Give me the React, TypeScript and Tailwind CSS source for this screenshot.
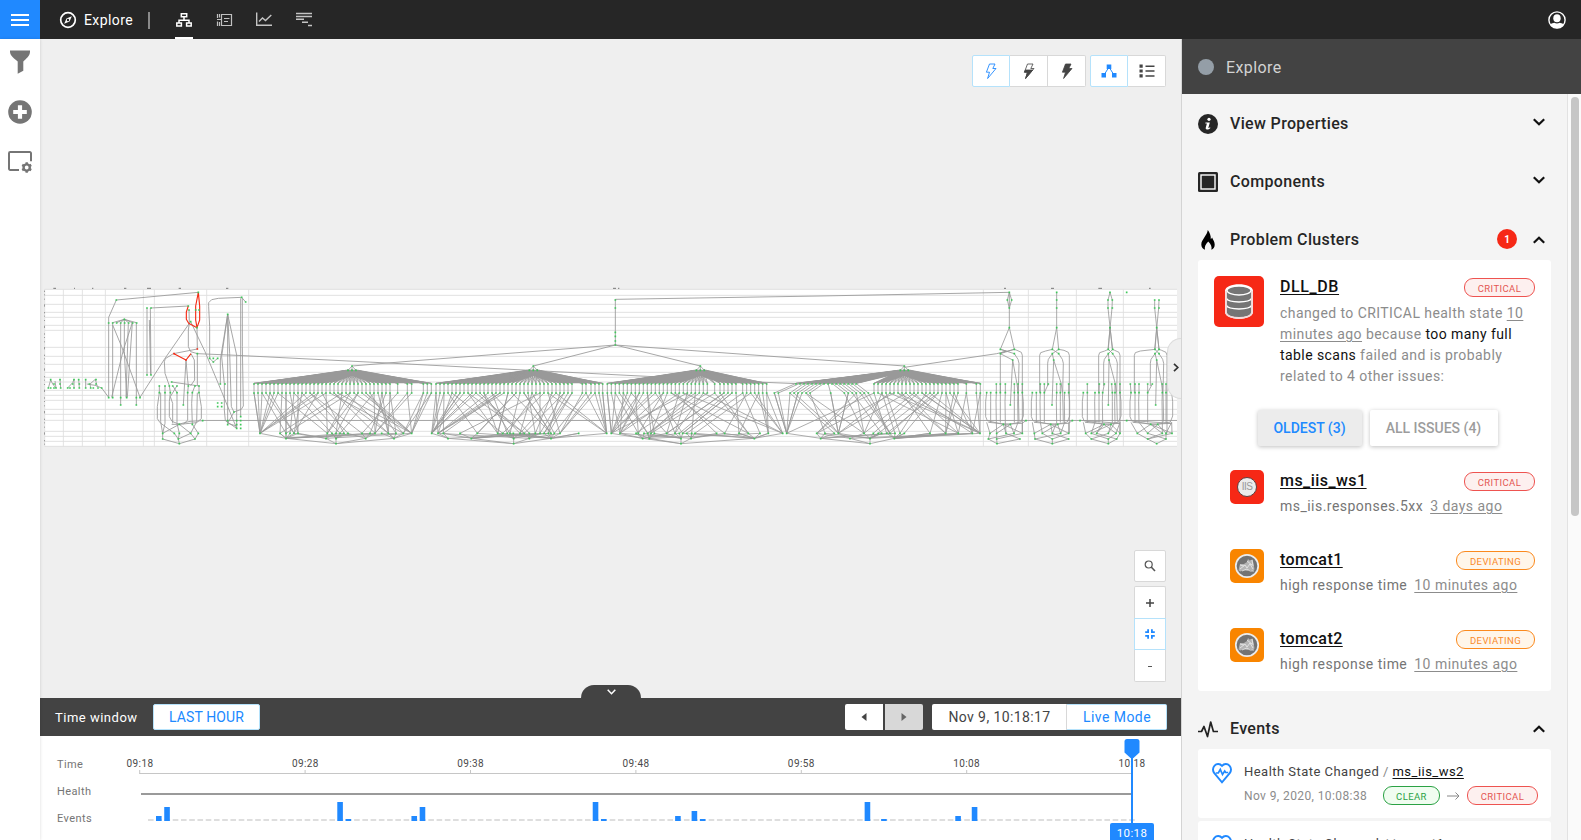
import React from "react";

type Pt = [number, number];

/* ---------- topology graph ---------- */

const EDGE = "#999999";
const OK = "#3fc85a";
const BAD = "#f52a14";

const path = (pts: Pt[]) => "M" + pts.map((p) => p.join(" ")).join("L");
const line = (...n: number[]): Pt[] => {
  const out: Pt[] = [];
  for (let i = 0; i < n.length; i += 2) out.push([n[i], n[i + 1]]);
  return out;
};
const range = (a: number, b: number, step: number) => {
  const out: number[] = [];
  for (let x = a; x <= b + 0.5; x += step) out.push(Math.round(x));
  return out;
};

function random(seed: number) {
  let s = seed;
  return () => {
    s = (s * 1664525 + 1013904223) % 4294967296;
    return s / 4294967296;
  };
}

const Edges = ({ lines, color = EDGE, width = 3 }: { lines: Pt[][]; color?: string; width?: number }) => (
  <path d={lines.map(path).join("")} fill="none" stroke={color} strokeWidth={width} strokeLinejoin="round" />
);

const Nodes = ({ pts, color = OK }: { pts: Pt[]; color?: string }) => (
  <path d={pts.map(([x, y]) => `M${x - 2.5} ${y - 2.5}h5v5h-5z`).join("")} fill={color} />
);

const row = (y: number, xs: number[]): Pt[] => xs.map((x) => [x, y] as Pt);

interface ClusterData {
  apex: number;
  top: number[];
  mid: number[];
  low: number[];
  base: number[];
  end: number;
  seed: number;
  notch?: Pt[];
}

const clusters: ClusterData[] = [
  {
    apex: 936,
    top: [...range(642, 1050, 12), 1073, 1102, 1115, 1150, 1162, 1174],
    mid: [...range(642, 1050, 12), 1073, 1102, 1115, 1150, 1162, 1174],
    low: [660, 720, 738, 750, 762, 774, 862, 876, 888, 900, 912, 924, 966, 990, 1005, 1025, 1045, 1068, 1090, 1115],
    base: [738, 858, 888, 977, 1062],
    end: 888,
    seed: 11,
  },
  {
    apex: 1480,
    top: [...range(1188, 1600, 12), 1627, 1638, 1653, 1665, 1677, 1688],
    mid: [...range(1188, 1600, 12), 1627, 1638, 1653, 1665, 1677, 1688],
    low: [1175, 1194, 1210, 1260, 1312, 1373, 1388, 1402, 1410, 1420, 1440, 1453, 1468, 1486, 1500, 1512, 1525, 1533, 1543, 1560, 1616, 1700],
    base: [1224, 1294, 1421, 1468, 1533],
    end: 1421,
    seed: 27,
  },
  {
    apex: 1981,
    top: [...range(1702, 2010, 12), 2024, 2040, ...range(2052, 2090, 12), ...range(2108, 2182, 12)],
    mid: [...range(1702, 2010, 12), 2024, 2040, ...range(2052, 2090, 12), ...range(2108, 2182, 12)],
    low: [1714, 1740, 1788, 1795, 1812, 1823, 1833, 1843, 1880, 1905, 1918, 1928, 1940, 1955, 1965, 2030, 2054, 2097, 2125, 2160, 2185, 2228],
    base: [1808, 1828, 1923, 1953, 2143],
    end: 1923,
    seed: 58,
  },
  {
    apex: 2593,
    top: [...range(2268, 2450, 12), ...range(2502, 2760, 12), 2779, 2809, 2821],
    mid: [2203, 2215, 2250, 2262, 2274, 2286, 2298, 2310, 2372, 2413, 2425, 2437, 2449, 2461, 2473, 2485, ...range(2502, 2760, 12), 2779, 2809, 2821],
    low: [2240, 2330, 2355, 2383, 2395, 2472, 2500, 2515, 2525, 2540, 2550, 2565, 2580, 2593, 2670, 2717, 2755, 2797, 2820],
    base: [2342, 2430, 2490, 2563],
    end: 2490,
    seed: 90,
    notch: line(2452, 311, 2498, 311, 2545, 289),
  },
];

function Cluster({ c }: { c: ClusterData }) {
  const rnd = random(c.seed);
  const lines: Pt[][] = [];
  for (const x of [c.apex - 12, c.apex, c.apex + 12]) lines.push(line(c.apex, 258, x, 271));
  c.top.forEach((x, i) => {
    lines.push(line(c.apex - 12, 271, x, 310), line(c.apex, 271, x, 310), line(c.apex + 12, 271, x, 310));
    lines.push(line(x, 310, c.mid[i], 339));
  });
  const n = c.low.length;
  const edgeTo = (x: number, j: number) => lines.push(line(x, 339, c.low[Math.max(0, Math.min(n - 1, j))], 460));
  c.mid.forEach((x, i) => {
    const t = i / (c.mid.length - 1);
    const spread = 0.14 + 0.95 * Math.sin(Math.PI * Math.min(1, t));
    edgeTo(x, Math.round((t + (rnd() - 0.5) * spread) * (n - 1)));
    if (i % 2 === 0) edgeTo(x, Math.round((t + (rnd() - 0.5) * spread) * (n - 1)));
  });
  c.low.forEach((x, i) => {
    const near = c.base.reduce((a, b) => (Math.abs(b - x) < Math.abs(a - x) ? b : a));
    lines.push(line(x, 460, near, 475));
    const other = c.base[Math.floor(rnd() * c.base.length)];
    if (i % 3 !== 0) lines.push(line(x, 460, other, 475));
  });
  for (const x of c.base) lines.push(line(x, 475, c.end, 491));
  const a = c.apex;
  const fan = line(a - 18, 269, a + 18, 269, c.top[c.top.length - 1], 310, a + 90, 310, a + 50, 305, a, 288, a - 50, 305, a - 90, 310, c.top[0], 310);
  return (
    <g>
      <path d={path(fan) + "z"} fill={EDGE} />
      {c.notch && <path d={path(c.notch) + "z"} fill="#ffffff" />}
      <Edges lines={lines} width={2.4} />
      <Nodes pts={[[c.apex, 258], ...row(271, [c.apex - 12, c.apex, c.apex + 12]), ...row(312, c.top), ...row(339, c.mid), ...row(460, c.low), ...row(476, c.base), [c.end, 491]]} />
    </g>
  );
}

interface TowerData {
  x: number;
  head: "diamond" | "line" | "twin" | "split";
  shoulders: [number, number];
  neck: number;
  pin: number;
  reach: [number, number];
  upper: number[];
  lower: number[];
  feet: number[];
  base: number[];
  end: number;
  join: number;
}

const towers: TowerData[] = [
  { x: 658, head: "diamond", shoulders: [631, 673], neck: 668, pin: 661, reach: [631, 697], upper: [619, 631, 646, 673, 684, 697], lower: [590, 602, 619, 631, 646, 673, 684, 697], feet: [600, 620, 648, 672, 697], base: [595, 620, 690], end: 621, join: 708 },
  { x: 800, head: "line", shoulders: [787, 806], neck: 791, pin: 786, reach: [749, 838], upper: [751, 763, 775, 800, 811, 836], lower: [727, 739, 751, 763, 800, 811, 824, 836], feet: [733, 757, 787, 812, 836], base: [735, 787, 836], end: 787, join: 847 },
  { x: 960, head: "twin", shoulders: [955, 968], neck: 957, pin: 955, reach: [926, 990], upper: [892, 928, 943, 965, 975, 990], lower: [880, 892, 915, 927, 938, 967, 975, 990], feet: [887, 904, 920, 955, 978, 990], base: [904, 955, 980], end: 955, join: 870 },
  { x: 1100, head: "split", shoulders: [1095, 1107], neck: 1100, pin: 1097, reach: [1033, 1131], upper: [1021, 1035, 1047, 1073, 1087, 1117, 1128], lower: [1023, 1035, 1047, 1073, 1117, 1128, 1145], feet: [1042, 1073, 1117, 1128, 1146], base: [1073, 1128], end: 1100, join: 1010 },
];

function Tower({ t }: { t: TowerData }) {
  const { x, shoulders: [a, b] } = t;
  const lines: Pt[][] = [];
  const nodes: Pt[] = [];
  if (t.head === "diamond") {
    lines.push(line(x, 37, x - 6, 60, x, 84, x + 7, 60, x, 37), line(x, 37, x, 143));
    nodes.push([x, 37], [x - 6, 60], [x + 7, 60], [x, 84]);
  } else if (t.head === "line") {
    lines.push(line(x, 37, x, 143));
    nodes.push([x, 37], [x, 60], [x, 84]);
  } else {
    lines.push(line(x - 6, 60, x - 6, 84, x + 7, 208), line(x + 7, 60, x + 6, 84, x - 6, 208));
    nodes.push(...row(60, [x - 6, x + 7]), ...row(84, [x - 6, x + 7]));
    if (t.head === "twin") {
      lines.push(line(x - 6, 60, x, 37, x + 7, 60));
      nodes.push([x, 37]);
    } else nodes.push([x - 90, 37]);
  }
  lines.push(line(x, 143, a, 208), line(x, 143, b, 208));
  const [l, r] = t.reach;
  lines.push(line(a, 208, l + 18, 213, l + 3, 218, l, 226, l, 338));
  lines.push(line(b, 208, r - 16, 211, r - 3, 217, r, 226, r, 460));
  lines.push(line(a, 208, b, 221, b + 11, 238, b + 14, 250, b + 12, 338, b + 14, 425));
  lines.push(line(b, 208, a, 221, t.neck, 240, t.pin, 375));
  lines.push(line(t.neck, 240, b + 8, 312, b + 11, 338));
  if (t.head !== "diamond") lines.push(line(a, 221, a - 12, 238, a - 14, 250, a - 14, 318));
  const first = t.lower[0];
  const last = t.lower[t.lower.length - 1];
  lines.push(line(first, 338, first - 3, 365, first - 3, 410, first + 2, 422, x - 20, 433, last, 430, t.join, 421));
  lines.push(line(last, 338, last + 3, 365, last + 3, 408, last - 4, 426, x, 433, first + 5, 427));
  t.upper.forEach((u) => {
    const below = t.lower.reduce((p, q) => (Math.abs(q - u) < Math.abs(p - u) ? q : p));
    lines.push(line(u, 312, below, 338));
  });
  t.lower.slice(1, -1).forEach((u, i) => lines.push(line(u, 338, u - (i % 2), 365, u, 428)));
  t.feet.forEach((f, i) => {
    lines.push(line(x + (i % 2 ? 3 : -18), 433, f, 460));
    lines.push(line(t.lower[Math.min(t.lower.length - 1, i * 2)], 427, f, 460));
    lines.push(line(f, 460, t.base[i % t.base.length], 477));
  });
  t.base.forEach((f) => lines.push(line(f, 477, t.end, 491)));
  nodes.push([x, 143], [a, 208], [b, 208], [a, 221], [b, 221], [t.neck, 240], [t.pin, 375], [t.join, 422], [x - 18, 433], [x + 3, 433], [t.end, 491]);
  nodes.push(...row(312, t.upper), ...row(338, t.lower), ...row(460, t.feet), ...row(477, t.base));
  return (
    <g>
      <Edges lines={lines} width={2.5} />
      <Nodes pts={nodes} />
    </g>
  );
}

function LeftGroup() {
  const grey: Pt[][] = [
    line(475, 37, 229, 60, 206, 112, 206, 352),
    line(253, 118, 218, 128, 218, 352),
    line(230, 128, 253, 118, 242, 128, 242, 375),
    line(265, 128, 253, 118, 289, 128, 289, 375),
    line(253, 118, 277, 128, 262, 352),
    line(253, 118, 253, 215, 260, 352),
    line(265, 128, 258, 352),
    line(218, 135, 245, 200, 300, 352),
    line(277, 128, 250, 210, 215, 352),
    line(300, 352, 373, 238, 450, 127),
    line(445, 78, 333, 84),
    line(321, 84, 321, 285),
    line(331, 84, 333, 285),
    line(328, 120, 332, 285),
    line(447, 90, 448, 130, 445, 150, 445, 200, 452, 215, 472, 221),
    line(471, 143, 472, 207, 400, 221, 376, 236, 373, 245, 375, 280, 388, 317),
    line(452, 125, 495, 215, 545, 335, 590, 445),
    line(438, 240, 430, 375),
    line(438, 240, 443, 300, 445, 317),
    line(453, 221, 463, 240, 464, 300, 452, 317),
    line(472, 221, 472, 317),
    line(395, 306, 478, 318),
    line(358, 317, 358, 338, 352, 380, 352, 416, 360, 428, 403, 460),
    line(375, 317, 375, 430, 368, 460),
    line(388, 317, 391, 338, 388, 365, 388, 410, 396, 424, 418, 433),
    line(398, 317, 411, 338, 411, 430, 418, 460),
    line(411, 317, 391, 350, 398, 370, 398, 430),
    line(362, 338, 362, 425, 368, 460),
    line(445, 317, 443, 338, 443, 420, 430, 433),
    line(465, 317, 457, 338, 455, 370, 457, 433, 475, 460),
    line(477, 317, 477, 338, 484, 380, 484, 416, 470, 428, 418, 433, 395, 433),
    line(472, 338, 470, 425, 452, 460),
    line(415, 433, 450, 424, 488, 422),
    line(418, 433, 368, 460, 368, 477, 418, 491, 465, 477, 475, 460),
    line(418, 433, 452, 460, 465, 477),
    line(403, 460, 415, 477, 418, 491),
    line(418, 460, 415, 477, 452, 460),
    line(605, 52, 535, 55, 515, 59, 506, 68, 506, 80, 509, 140, 509, 235, 520, 246, 533, 235),
    line(605, 52, 617, 66),
    line(607, 55, 607, 200, 610, 378, 604, 388, 582, 396),
    line(602, 55, 602, 410),
    line(563, 103, 541, 240, 541, 312),
    line(563, 103, 545, 230, 553, 312, 553, 390, 556, 422, 590, 445),
    line(563, 103, 563, 430, 590, 438),
    line(563, 103, 569, 220, 574, 380, 582, 396),
    line(563, 103, 590, 225, 590, 445),
    line(582, 396, 563, 430),
    line(25, 324, 32, 300, 38, 312, 48, 324, 45, 303),
    line(62, 324, 60, 298),
    line(83, 324, 98, 308, 102, 298, 102, 324),
    line(118, 324, 116, 298),
    line(137, 298, 137, 324),
    line(140, 312, 165, 316, 185, 324, 206, 352),
    line(152, 324, 150, 312, 166, 298, 172, 320),
  ];
  const red: Pt[][] = [
    line(475, 37, 467, 78, 467, 120, 471, 143, 479, 120, 479, 78, 475, 37),
    line(445, 78, 439, 96, 439, 118, 446, 130, 471, 143),
    line(402, 221, 438, 240, 453, 221),
  ];
  const nodes: Pt[] = [
    [229, 60], [253, 118], ...row(129, range(206, 290, 12)), ...row(353, [206, 218, 242, 260, 289, 300]), ...row(375, [242, 289]),
    ...row(84, [321, 333]), ...row(285, [321, 333]), [475, 37], [445, 78], [447, 90], [467, 90], [477, 90], [452, 125], [471, 143],
    [472, 221], [395, 306], [430, 375], ...row(318, [358, 375, 388, 398, 411, 445, 465, 477]), ...row(338, [358, 375, 391, 411, 443, 457, 477]),
    [418, 433], [457, 433], [488, 422], ...row(460, [368, 403, 418, 452, 475]), ...row(477, [368, 415, 465]), [418, 491],
    [605, 52], [617, 66], [563, 103], ...row(235, [509, 520, 533]), [520, 246], ...row(312, [541, 555]),
    ...row(369, [533, 545]), ...row(380, [533, 545]), [582, 396], [602, 410], [563, 422], [563, 434],
    ...row(422, [590, 602]), ...row(434, [590, 602]), ...row(445, [590, 602]),
    ...row(324, [25, 32, 42, 48, 62, 83, 90, 102, 118, 137, 152, 160, 174, 185]), ...row(299, [32, 60, 102, 116, 137, 168]),
    ...row(312, [42, 60, 98, 118, 148, 168]),
  ];
  return (
    <g>
      <Edges lines={grey} width={2.6} />
      <Edges lines={red} color={BAD} width={3.4} />
      <Nodes pts={nodes} />
      <Nodes pts={[[472, 207], [402, 221], [438, 240]]} color={BAD} />
    </g>
  );
}

const gridRows = [28, 46, 73, 97, 112, 136, 151, 202, 229, 253, 277, 292, 306, 331, 346, 361, 388, 403, 421, 454, 469, 484, 499];
const gridCols = [14, 70, 127, 196, 310, 343, 500, 626, 2830, 2965, 3109, 3250];

function Topology() {
  return (
    <svg className="absolute left-0 top-[241px]" width="1141" height="175" viewBox="0 0 3423 525">
      <rect x="14" y="28" width="3397" height="471" fill="#ffffff" />
      <path d={gridRows.map((y) => `M14 ${y}H3411`).join("")} stroke="#dcdcdc" strokeWidth="2.6" />
      <path d={gridCols.map((x) => `M${x} 28V499`).join("")} stroke="#dedede" strokeWidth="2.6" />
      <path d="M488 421.500H3411" stroke="#a8a8a8" strokeWidth="3" />
      <path
        d="M40 25h8M102 25h3M156 25h4M252 25h7M321 25h12M416 25h7M558 25h7M1719 25h9M1734 25h4M2892 25h6M3033 25h9M3175 25h11M3327 25h5"
        stroke="#777"
        strokeWidth="3"
      />
      <path d="M13.500 32V495" stroke="#8a8a8a" strokeWidth="2.500" strokeDasharray="4 7 3 10 3 14 7 16" />
      <Edges
        width={2.6}
        lines={[
          line(472, 221, 590, 226, 1140, 254, 1840, 290),
          line(936, 258, 1140, 241, 1726, 195, 1480, 258),
          line(1981, 258, 1726, 195, 2250, 233, 2593, 258),
          line(1726, 195, 1726, 58, 2340, 48, 2908, 37),
          line(2593, 262, 2870, 221, 2923, 208),
          line(2150, 306, 2270, 311),
        ]}
      />
      <Nodes pts={[[1726, 60], [1726, 84], [1726, 157], [1726, 169], [1726, 183], [1726, 195]]} />
      {clusters.map((c) => (
        <Cluster key={c.apex} c={c} />
      ))}
      <LeftGroup />
      <g transform="translate(2250 0)">
        {towers.map((t) => (
          <Tower key={t.x} t={t} />
        ))}
      </g>
    </svg>
  );
}

/* ---------- icons ---------- */

const bolt = "M5.500 1h5.500l-2.200 4.500H12L3.600 15.500l1.900-6.300H2.400z";

const Compass = () => (
  <svg width="18" height="18" viewBox="0 0 18 18" fill="none" stroke="#fff" strokeWidth="1.700">
    <circle cx="9" cy="9" r="7.300" />
    <path d="M12.800 5.200 7.500 7.400 5.200 12.800 10.500 10.500z" fill="#fff" stroke="none" />
    <circle cx="9" cy="9" r="1.200" fill="#262626" stroke="none" />
  </svg>
);

const NavTopology = () => (
  <svg width="18" height="16" viewBox="0 0 18 16" fill="none" stroke="#fff" strokeWidth="1.500">
    <path d="M6.300 1.800h5.400v3H6.300zM1.800 11h4.600v3H1.800zM11.600 11h4.600v3h-4.600zM9 5v3.300M4 11V8.300h10V11" />
  </svg>
);
const NavTrace = () => (
  <svg width="17" height="14" viewBox="0 0 17 14" fill="none" stroke="#c0c0c0" strokeWidth="1.200">
    <path d="M5.500 1.500h10v11h-10zM1.500 1v4M1.500 8.500v4.500M3.500 1v3.500M3.500 9v4M1 6.500h4.500M8 5.500h5.500M8 8.500h4" />
  </svg>
);
const NavChart = () => (
  <svg width="18" height="15" viewBox="0 0 18 15" fill="none" stroke="#c4c4c4" strokeWidth="1.400">
    <path d="M1.700.5v12.800H17M4 9.500 7.500 6l3 2.500L16.300 3" />
  </svg>
);
const NavBars = () => (
  <svg width="18" height="15" viewBox="0 0 18 15" stroke="#c4c4c4" strokeWidth="1.500">
    <path d="M1 1.500h16M1 4.500h16M1 7.200h8M7 10.200h6M13 13.500h4" />
  </svg>
);

const UserIcon = () => (
  <svg width="18" height="18" viewBox="0 0 18 18">
    <circle cx="9" cy="9" r="8.100" fill="none" stroke="#fff" strokeWidth="1.400" />
    <ellipse cx="9" cy="7.200" rx="3.700" ry="4" fill="#fff" />
    <path d="M2 13.500c1.500-1.300 3.500-1.500 4.300-1.800 1.700 1.100 3.700 1.100 5.400 0 .8.300 2.800.5 4.300 1.800A8.200 8.200 0 0 1 9 17.300a8.200 8.200 0 0 1-7-3.800z" fill="#fff" />
  </svg>
);

const Filter = () => (
  <svg width="20" height="24" viewBox="0 0 20 24" fill="#757575">
    <path d="M0 .500h20v1.200c0 4.200-4 7-6.700 9.800v9.300l-5.600 3V11.500C5 8.800 0 6 0 1.700z" />
  </svg>
);
const AddCircle = () => (
  <svg width="24" height="24" viewBox="0 0 24 24">
    <circle cx="12" cy="12" r="11.800" fill="#757575" />
    <path d="M12 5.200v13.600M5.200 12h13.600" stroke="#fff" strokeWidth="4.200" />
  </svg>
);
const ScreenGear = () => (
  <svg width="24" height="23" viewBox="0 0 24 23" fill="none" stroke="#757575">
    <path d="M11 18.900H2.200A1.200 1.200 0 0 1 1 17.700V2.200A1.200 1.200 0 0 1 2.200 1h19.600A1.200 1.200 0 0 1 23 2.200v8" strokeWidth="2" />
    <circle cx="18.700" cy="16.500" r="3.100" strokeWidth="2.400" />
    <path d="M18.700 11.300v2M18.700 19.700v2M14.200 13.900l1.700 1M21.500 18.100l1.700 1M14.200 19.100l1.700-1M21.500 14.900l1.700-1" strokeWidth="2.400" />
  </svg>
);

const Chevron = ({ up = false }: { up?: boolean }) => (
  <svg width="12" height="8" viewBox="0 0 12 8" fill="none" stroke="#111" strokeWidth="2.200">
    <path d={up ? "M.8 6.800 6 1.700l5.200 5.100" : "M.8 1.200 6 6.300l5.200-5.100"} />
  </svg>
);

const InfoIcon = () => (
  <svg width="20" height="20" viewBox="0 0 20 20">
    <circle cx="10" cy="10" r="10" fill="#262626" />
    <circle cx="11" cy="5.300" r="1.600" fill="#fff" />
    <path d="M7.500 8.400h4.300l-1.500 5.500c.6.200 1.200-.2 1.700-.6l.4.600c-1.200 1.400-2.400 1.800-3.400 1.700-1.200-.2-1.500-1-1.200-2.100l1.100-4H7.300z" fill="#fff" />
  </svg>
);
const ComponentsIcon = () => (
  <svg width="20" height="20" viewBox="0 0 20 20">
    <rect width="20" height="20" rx="1.500" fill="#262626" />
    <rect x="3" y="3" width="14" height="14" fill="none" stroke="#fff" strokeWidth="1.400" />
  </svg>
);
const Flame = () => (
  <svg width="20" height="20" viewBox="0 0 20 20" fill="#000">
    <path d="M9.800 0c-.4 2.900-1.700 4.500-3.200 7C5 9.800 3.200 11.600 3.300 14.700c.1 2.500 1.700 4.400 3.700 5-.6-2.900.2-5 3.200-8.200 2.800 3 3.800 5 3.200 8.200 1.900-.7 3.300-2.600 3.300-5 0-2.800-1.400-4.600-2.600-7.300-.4.800-.8 1.200-1.300 1.500C13 5.900 11.700 2.600 9.800 0z" />
  </svg>
);
const Pulse = () => (
  <svg width="20" height="17" viewBox="0 0 20 17" fill="none" stroke="#222" strokeWidth="1.700" strokeLinejoin="round">
    <path d="M0 10.500h3.500L6 5.500l3.500 10L12.700 1l2.700 9.500H20" />
  </svg>
);
const HeartPulse = () => (
  <svg width="20" height="21" viewBox="0 0 20 21" fill="none" stroke="#2089ff">
    <path d="M10 2.800C8 .6 4.600.3 2.600 2.600.5 5 .8 8 2.300 10.200L10 19.300l7.700-9.100C19.200 8 19.500 5 17.400 2.600 15.400.3 12 .6 10 2.800z" strokeWidth="1.900" />
    <path d="M3.800 10h2.500l2-3.500 2.200 5 2.200-3.500 1 1.500h2.500" strokeWidth="1.700" />
  </svg>
);

const Database = () => (
  <svg width="50" height="51" viewBox="0 0 50 51">
    <path d="M11 15c0-9 28-9 28 0v21c0 9-28 9-28 0z" fill="#fff" />
    <path d="M12.500 15.500c0-6 25-6 25 0v20.500c0 7-25 7-25 0z" fill="#757575" />
    <ellipse cx="25" cy="14.500" rx="12" ry="4.500" fill="#757575" stroke="#fff" strokeWidth="1.300" />
    <path d="M12.500 22.500c2 4.500 23 4.500 25 0M12.500 29.500c2 4.500 23 4.500 25 0" fill="none" stroke="#fff" strokeWidth="1.500" />
    <path d="M12 15v21c0 8 26 8 26 0V15" fill="none" stroke="#f2dada" strokeWidth="1.800" />
  </svg>
);

const Iis = () => (
  <span className="flex size-[34px] shrink-0 items-center justify-center rounded-[5px] bg-[#f62816]">
    <span className="flex size-5 items-center justify-center rounded-full border border-[#5c4040] bg-[#ececec] font-['Liberation_Sans'] text-[10px] leading-none tracking-[-0.5px] text-[#999]">
      IIS
    </span>
  </span>
);
const Tomcat = () => (
  <span className="flex size-[34px] shrink-0 items-center justify-center rounded-[5px] bg-[#f98500]">
    <svg width="26" height="26" viewBox="0 0 26 26">
      <circle cx="13" cy="13" r="11.200" fill="#737373" stroke="#ececec" strokeWidth="1.700" />
      <path d="M5 15l1-4 4 0 3-2 1-3 1.500 1.500 3-1 1 4 1 6-2 1.500-3-1-2 1-4-1-3 1.500-2-1z" fill="#b5b5b5" />
      <path d="M6 16l5-4 2 3 3-4 3 5M8 18l5-2 3 2 4 0M13 8l5 4M18 7l1 6M6 12l4 1" fill="none" stroke="#ededed" strokeWidth=".8" />
    </svg>
  </span>
);

/* ---------- shared pieces ---------- */

const badgeTones = {
  critical: "border-[#ee5350] bg-[#fdf0ef] text-[#e45653] w-[71px]",
  deviating: "border-[#fb8a1e] bg-[#fff6ea] text-[#f98a2b] w-[79px]",
  clear: "border-[#2ba245] bg-[#f0fdf0] text-[#2ba245] w-[57px]",
};

const Badge = ({ tone, children }: { tone: keyof typeof badgeTones; children: string }) => (
  <span className={`flex h-[19px] shrink-0 items-center justify-center rounded-[9px] border pt-[3px] text-[9.5px] leading-none tracking-[0.4px] ${badgeTones[tone]}`}>
    {children}
  </span>
);

const Section = ({ icon, title, open, count }: { icon: React.ReactNode; title: string; open?: boolean; count?: number }) => (
  <div className={`flex h-[58px] shrink-0 items-center pl-4 pr-[22px] ${open ? "-mb-2" : ""}`}>
    <span className="flex w-8 items-center pt-0.5">{icon}</span>
    <h2 className="flex-1 pt-0.5 text-[16px] font-medium leading-5 tracking-[0.35px] text-[#262626]">{title}</h2>
    {count !== undefined && (
      <span className="mr-4 flex size-5 items-center justify-center rounded-full bg-[#f62816] text-[10px] font-bold text-white">{count}</span>
    )}
    <span className={open ? "pt-px" : "pb-0.5"}>
      <Chevron up={open} />
    </span>
  </div>
);

const Issue = ({ icon, name, check, age, critical }: { icon: React.ReactNode; name: string; check: string; age: string; critical?: boolean }) => (
  <div className="flex h-[79px] gap-4 pl-8 pr-4">
    {icon}
    <div className="flex-1">
      <div className="flex items-start justify-between">
        <span className="pt-px text-[16px] font-medium leading-5 tracking-[0.45px] text-[#111] underline underline-offset-2">{name}</span>
        <span className="pt-0.5">
          <Badge tone={critical ? "critical" : "deviating"}>{critical ? "CRITICAL" : "DEVIATING"}</Badge>
        </span>
      </div>
      <p className="mt-[5px] whitespace-nowrap text-[14px] leading-5 tracking-[0.47px] text-[#757575]">
        {check}
        <span className="ml-[7px] text-[#8c8c8c] underline underline-offset-2">{age}</span>
      </p>
    </div>
  </div>
);

const EventCard = ({ target }: { target: string }) => (
  <div className="mx-4 mb-[3px] flex h-[69px] w-[353px] shrink-0 rounded-[3px] bg-white pl-[14px] pr-[13px] pt-[14px]">
    <span className="w-8 shrink-0">
      <HeartPulse />
    </span>
    <div className="flex-1">
      <p className="pt-px text-[13px] leading-4 tracking-[0.47px] text-[#444]">
        Health State Changed <span className="text-[#888]">/</span> <span className="text-[#111] underline underline-offset-2">{target}</span>
      </p>
      <div className="mt-[6px] flex items-center">
        <span className="w-[139px] whitespace-nowrap text-[12px] tracking-[0.4px] text-[#8c8c8c]">Nov 9, 2020, 10:08:38</span>
        <Badge tone="clear">CLEAR</Badge>
        <svg className="ml-[7px] mr-[7px]" width="13" height="8" viewBox="0 0 13 8" fill="none" stroke="#888">
          <path d="M0 4h12M8.500.5 12 4 8.500 7.500" />
        </svg>
        <Badge tone="critical">CRITICAL</Badge>
      </div>
    </div>
  </div>
);

const tool = "flex items-center justify-center border bg-white";

/* ---------- timeline ---------- */

const ticks = ["09:18", "09:28", "09:38", "09:48", "09:58", "10:08", "10:18"];
const eventBars: [number, number][] = [
  [0, 5], [1, 14], [22, 19], [23, 2], [31, 5], [32, 14], [53, 19], [54, 2], [63, 5], [65, 10], [66, 2], [86, 19], [88, 2], [97, 5], [99, 14],
];

function Timeline() {
  return (
    <div className="relative h-[104px] overflow-hidden bg-white text-[11px] tracking-[0.4px] text-[#757575]">
      <div className="flex h-full pl-[17px] pt-[15px]">
        <div className="w-[83px] leading-[27px]">
          <div>Time</div>
          <div>Health</div>
          <div>Events</div>
        </div>
        <div className="flex w-[992px] justify-between">
          {ticks.map((t) => (
            <span key={t} className="flex h-4 w-0 justify-center pt-[5px] text-[10px] leading-4 tracking-[0.4px] text-[#4a4a4a]">
              {t}
            </span>
          ))}
        </div>
      </div>
      <svg className="absolute left-0 top-0" width="1141" height="104" viewBox="40 736 1141 104">
        <path d="M139.500 773.500H1132" stroke="#c6c6c6" />
        <path d={ticks.map((_, i) => `M${139.7 + i * 165.4} 770v4`).join("")} stroke="#c6c6c6" />
        <path d="M141 794H1132" stroke="#9a9a9a" strokeWidth="2" />
        <path d="M148 820H1136" stroke="#dedede" strokeWidth="2" strokeDasharray="5.600 2.645" />
        {eventBars.map(([k, h]) => (
          <rect key={k} x={156 + k * 8.24} y={821 - h} width="5.600" height={h} fill="#2089ff" />
        ))}
        <path d="M1132 755V824" stroke="#2089ff" strokeWidth="2" />
        <path d="M1127 739h10a2.500 2.500 0 0 1 2.500 2.500v11l-6 5.500h-3l-6-5.500v-11a2.500 2.500 0 0 1 2.500-2.500z" fill="#2089ff" />
      </svg>
      <div className="absolute left-[1070px] top-[87px] flex h-[17px] w-11 items-center justify-center rounded-t-[2px] bg-[#2089ff] pt-[3px] text-[11.5px] leading-[14px] text-white">
        10:18
      </div>
    </div>
  );
}

/* ---------- page ---------- */

export default function App() {
  return (
    <div className="flex h-[840px] w-[1581px] flex-col overflow-hidden bg-white font-[Roboto,sans-serif]">
      <header className="flex h-[39px] shrink-0 items-center bg-[#262626]">
        <div className="flex h-full w-10 items-center justify-center bg-[#2089ff]">
          <span className="flex w-[18px] flex-col gap-[3px]">
            <i className="h-0.5 bg-white" />
            <i className="h-0.5 bg-white" />
            <i className="h-0.5 bg-white" />
          </span>
        </div>
        <span className="ml-[19px] mr-[7px] pt-px">
          <Compass />
        </span>
        <span className="w-[64px] pt-0.5 text-[14px] tracking-[0.4px] text-white">Explore</span>
        <span className="mt-0.5 h-[17px] w-0.5 bg-[#8a8a8a]" />
        <nav className="ml-[25px] flex h-full gap-[13px]">
          <span className="relative flex w-[27px] items-center after:absolute after:bottom-0 after:left-0 after:h-0.5 after:w-[18px] after:bg-white after:content-['']">
            <NavTopology />
          </span>
          <span className="flex w-[27px] items-center pl-px"><NavTrace /></span>
          <span className="flex w-[27px] items-center"><NavChart /></span>
          <span className="flex w-[27px] items-center"><NavBars /></span>
        </nav>
        <span className="ml-auto mr-[15px]">
          <UserIcon />
        </span>
      </header>

      <div className="flex min-h-0 flex-1">
        <aside className="z-10 flex w-10 shrink-0 flex-col items-center gap-[26px] bg-white pt-[11px] shadow-[0_0_3px_rgba(0,0,0,0.15)]">
          <Filter />
          <AddCircle />
          <span className="pt-px"><ScreenGear /></span>
        </aside>

        <div className="flex w-[1141px] shrink-0 flex-col">
          <main className="relative h-[659px] overflow-hidden bg-[#efefef]">
            <Topology />

            <div className="absolute right-[15px] top-4 flex gap-1">
              <div className="flex">
                <span className={`${tool} h-8 w-[38px] rounded-l-[2px] border-[#b5e2fb]`}>
                  <svg width="14" height="16" viewBox="0 0 14 16" fill="none" stroke="#2089ff" strokeWidth=".9"><path d={bolt} /></svg>
                </span>
                <span className={`${tool} h-8 w-[38px] border-l-0 border-[#d8d8d8] pl-px`}>
                  <svg width="14" height="16" viewBox="0 0 14 16" fill="none" stroke="#444" strokeWidth=".8"><path d={bolt} /><path d="M3.400 7h7.400L3.600 15.500l1.900-6.300H2.400z" fill="#444" /></svg>
                </span>
                <span className={`${tool} h-8 w-[38px] rounded-r-[2px] border-l-0 border-[#d8d8d8] pl-px`}>
                  <svg width="14" height="16" viewBox="0 0 14 16" fill="#444" stroke="#444" strokeWidth=".8"><path d={bolt} /></svg>
                </span>
              </div>
              <div className="flex">
                <span className={`${tool} h-8 w-[38px] rounded-l-[2px] border-[#b5e2fb]`}>
                  <svg width="16" height="14" viewBox="0 0 16 14" fill="#2089ff"><path d="M5.700.5h4.600V5H5.700zM.5 9H5v4.500H.5zM11 9h4.500v4.500H11z" /><path d="M8 3 3 11M8 3l5 8" stroke="#2089ff" /></svg>
                </span>
                <span className={`${tool} h-8 w-[38px] rounded-r-[2px] border-l-0 border-[#d8d8d8] pl-px`}>
                  <svg width="16" height="14" viewBox="0 0 16 14" fill="#444"><path d="M.5.500h3.200v3.200H.5zM.5 5.400h3.200v3.200H.5zM.5 10.300h3.200v3.200H.5zM6.500 1.500h9V3h-9zM6.500 6.300h9v1.500h-9zM6.500 11.200h9v1.500h-9z" /></svg>
                </span>
              </div>
            </div>

            <div className="absolute bottom-[16px] right-[15px] flex w-8 flex-col text-[16px] text-[#444]">
              <span className={`${tool} mb-1 h-8 rounded-[2px] border-[#d8d8d8]`}>
                <svg width="12" height="12" viewBox="0 0 12 12" fill="none" stroke="#555" strokeWidth="1.200"><circle cx="4.700" cy="4.500" r="3.500" /><path d="m7.200 7 3.800 4" strokeWidth="1.600" /></svg>
              </span>
              <span className={`${tool} h-8 rounded-t-[2px] border-b-0 border-[#d8d8d8]`}>
                <svg width="8" height="8" viewBox="0 0 8 8" stroke="#444" strokeWidth="1.500"><path d="M4 0v8M0 4h8" /></svg>
              </span>
              <span className={`${tool} h-8 border-[#b5e2fb] pb-px`}>
                <svg width="10" height="10" viewBox="0 0 10 10" fill="none" stroke="#2089ff" strokeWidth="1.800"><path d="M3.100.2v2.900H.2M6.900.2v2.900h2.900M3.100 9.800V6.900H.2M6.900 9.800V6.900h2.900" /></svg>
              </span>
              <span className={`${tool} h-8 rounded-b-[2px] border-t-0 border-[#d8d8d8]`}>
                <i className="mt-0.5 h-[1.5px] w-1 bg-[#555]" />
              </span>
            </div>

            <div className="absolute right-0 top-[299px] flex h-[61px] w-[14px] items-center justify-center rounded-l-[14px] border border-r-0 border-[#dcdcdc] bg-[#efefef] pb-[2px] pl-0.5">
              <svg width="6" height="9" viewBox="0 0 6 9" fill="none" stroke="#333" strokeWidth="1.700"><path d="m1 .8 3.800 3.700L1 8.200" /></svg>
            </div>

            <div className="absolute bottom-0 left-[541px] flex h-[13px] w-[60px] justify-center rounded-t-[14px] bg-[#434343] pt-1">
              <svg width="9" height="6" viewBox="0 0 9 6" fill="none" stroke="#fff" strokeWidth="1.500"><path d="M.7.7 4.500 4.700 8.300.7" /></svg>
            </div>
          </main>

          <div className="flex h-[38px] shrink-0 items-center bg-[#434343] pl-[15px] pr-[14px] text-[14px]">
            <span className="w-[98px] pt-px text-[13px] tracking-[0.5px] text-white">Time window</span>
            <span className="flex h-[26px] w-[107px] items-center justify-center rounded-[2px] border border-[#b5e2fb] bg-white tracking-[0.1px] text-[#2089ff]">LAST HOUR</span>
            <div className="ml-auto flex">
              <span className="mr-0.5 flex h-[26px] w-[38px] items-center justify-center rounded-l-[2px] bg-white">
                <svg width="6" height="8" viewBox="0 0 6 8"><path d="M5.500 0v8L.5 4z" fill="#444" /></svg>
              </span>
              <span className="mr-[9px] flex h-[26px] w-[38px] items-center justify-center rounded-r-[2px] bg-[#d8d8d8]">
                <svg width="6" height="8" viewBox="0 0 6 8"><path d="M.5 0v8l5-4z" fill="#666" /></svg>
              </span>
              <span className="flex h-[26px] w-[135px] items-center justify-center rounded-l-[2px] border-r border-[#d8d8d8] bg-white pl-px tracking-[0.4px] text-[#444]">Nov 9, 10:18:17</span>
              <span className="flex h-[26px] w-[100px] items-center justify-center rounded-r-[2px] border border-l-0 border-[#b5e2fb] bg-white pl-px tracking-[0.45px] text-[#2089ff]">Live Mode</span>
            </div>
          </div>
          <Timeline />
        </div>

        <section className="flex min-w-0 flex-1 flex-col border-l border-[#d4d4d4]">
          <div className="flex h-[55px] shrink-0 items-center bg-[#434343] pl-4">
            <span className="size-4 rounded-full bg-[#949ea7]" />
            <span className="ml-3 pt-0.5 text-[16px] tracking-[0.4px] text-[#d2d2d2]">Explore</span>
          </div>
          <div className="flex min-h-0 flex-1 overflow-hidden">
            <div className="flex w-[386px] shrink-0 flex-col border-r border-[#e2e2e2] bg-[#f4f4f4]">
              <Section icon={<InfoIcon />} title="View Properties" />
              <Section icon={<ComponentsIcon />} title="Components" />
              <Section icon={<Flame />} title="Problem Clusters" open count={1} />

              <div className="ml-4 h-[431px] w-[353px] shrink-0 rounded-[3px] bg-white pt-4">
                <div className="flex gap-4 pl-4 pr-4">
                  <span className="h-[51px] w-[50px] shrink-0 overflow-hidden rounded-[5px] bg-[#f62816]">
                    <Database />
                  </span>
                  <div className="flex-1">
                    <div className="flex items-start justify-between">
                      <span className="pt-px text-[16px] font-medium leading-5 tracking-[0.6px] text-[#111] underline underline-offset-2">DLL_DB</span>
                      <span className="pt-0.5"><Badge tone="critical">CRITICAL</Badge></span>
                    </div>
                    <p className="mt-[6px] whitespace-nowrap text-[14px] leading-[21px] tracking-[0.43px] text-[#8c8c8c]">
                      changed to CRITICAL health state <span className="underline underline-offset-2">10</span>
                      <br />
                      <span className="underline underline-offset-2">minutes ago</span> because <span className="text-[#111]">too many full</span>
                      <br />
                      <span className="text-[#111]">table scans</span> failed and is probably
                      <br />
                      related to 4 other issues:
                    </p>
                  </div>
                </div>
                <div className="mb-6 mt-[23px] flex justify-center gap-2 pl-[6px] text-[14px] font-medium">
                  <span className="flex h-9 w-[104px] items-center justify-center rounded-[2px] bg-[#ececec] text-[#2089ff] shadow-[0_1px_4px_rgba(0,0,0,0.25)]">OLDEST (3)</span>
                  <span className="flex h-9 w-[128px] items-center justify-center rounded-[2px] bg-white text-[#9c9c9c] shadow-[0_1px_4px_rgba(0,0,0,0.25)]">ALL ISSUES (4)</span>
                </div>
                <Issue icon={<Iis />} name="ms_iis_ws1" check="ms_iis.responses.5xx" age="3 days ago" critical />
                <Issue icon={<Tomcat />} name="tomcat1" check="high response time" age="10 minutes ago" />
                <Issue icon={<Tomcat />} name="tomcat2" check="high response time" age="10 minutes ago" />
              </div>

              <div className="h-2 shrink-0" />
              <Section icon={<Pulse />} title="Events" open />
              <EventCard target="ms_iis_ws2" />
              <EventCard target="tomcat1" />
            </div>
            <div className="flex-1 bg-[#fafafa] pl-[3px] pt-[3px]">
              <div className="h-[419px] w-2 rounded-full bg-[#c6c6c6]" />
            </div>
          </div>
        </section>
      </div>
    </div>
  );
}
